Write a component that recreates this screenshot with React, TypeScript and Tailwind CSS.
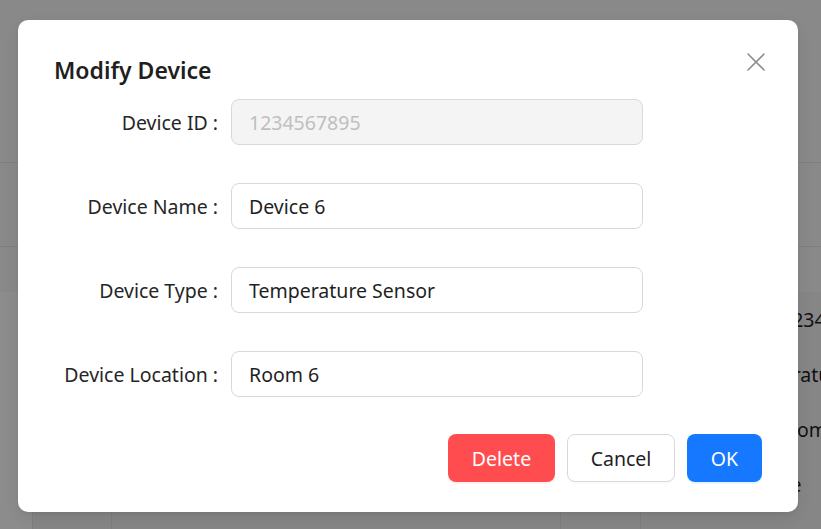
import React from 'react';

const rows = [
  { label: 'Device ID', value: '1234567895', disabled: true },
  { label: 'Device Name', value: 'Device 6' },
  { label: 'Device Type', value: 'Temperature Sensor' },
  { label: 'Device Location', value: 'Room 6' },
];

const tableRows = [
  { text: '1234567895', pad: 'pl-[140px]' },
  { text: 'Temperature Sensor', pad: 'pl-[90px]' },
  { text: 'Room 6', pad: 'pl-[132px]' },
  { text: 'Online', pad: 'pl-[100px]' },
  { text: '', pad: '' },
];

function CloseIcon() {
  return (
    <svg width="18" height="18" viewBox="0 0 18 18" fill="none">
      <path d="M1 1L17 17M17 1L1 17" stroke="#8c8c8c" strokeWidth="1.6" strokeLinecap="round" />
    </svg>
  );
}

export default function App() {
  return (
    <div className="relative h-[529px] w-[821px] overflow-hidden bg-white font-['Noto_Sans',sans-serif] text-[#1f1f1f]">
      {/* page behind the dialog */}
      <div className="h-[163px] border-b border-[#e8e8e8] bg-[#fafafa]" />
      <div className="h-[84px] border-b border-[#e8e8e8] bg-[#fafafa]" />
      <div className="h-[45px] bg-[#fafafa]" />
      <div className="ml-[32px] border-l border-[#e8e8e8] bg-[#f5f5f5]">
        {tableRows.map((r, i) => (
          <div key={i} className="flex h-[55px] items-center">
            <div className="h-full w-[79px] shrink-0 border-r border-[#e8e8e8]" />
            <div className="h-full w-[449px] shrink-0 border-r border-[#e8e8e8]" />
            <div className="h-full w-[80px] shrink-0 border-r border-[#e8e8e8]" />
            <div className={`shrink-0 whitespace-nowrap text-[19.5px] ${r.pad}`}>{r.text}</div>
          </div>
        ))}
      </div>

      {/* mask */}
      <div className="absolute inset-0 bg-black/45" />

      {/* dialog */}
      <div className="absolute left-[18px] top-[20px] h-[492px] w-[780px] rounded-[10px] bg-white px-[36px] pt-[35px] pb-[30px] shadow-[0_6px_16px_rgba(0,0,0,0.08),0_3px_6px_-4px_rgba(0,0,0,0.12)]">
        <button className="absolute right-[33px] top-[33px] flex h-[18px] w-[18px] items-center justify-center">
          <CloseIcon />
        </button>

        <h2 className="text-[23px] font-semibold leading-[30px] text-[#1f1f1f]">Modify Device</h2>

        <div className="mt-[14px]">
          {rows.map((r) => (
            <div key={r.label} className="mb-[38px] flex items-center">
              <div className="flex w-[177px] shrink-0 justify-end pt-[2px] pr-[13px] text-[19.5px] text-[#262626]">
                <span>{r.label}</span>
                <span className="ml-[5px]">:</span>
              </div>
              <div
                className={`flex h-[46px] w-[412px] items-center rounded-lg border border-[#d9d9d9] px-[17px] pt-[2px] text-[19.5px] ${
                  r.disabled ? 'bg-[#f4f4f4] text-[#bfbfbf]' : 'bg-white text-[#1f1f1f]'
                }`}
              >
                {r.value}
              </div>
            </div>
          ))}
        </div>

        <div className="-mt-[1px] flex justify-end gap-[12px]">
          <button className="h-[48px] w-[107px] rounded-lg bg-[#ff4d4f] pt-[2px] text-[19.5px] text-white shadow-[0_2px_0_rgba(255,38,5,0.06)]">
            Delete
          </button>
          <button className="h-[48px] w-[108px] rounded-lg border border-[#d9d9d9] bg-white pt-[2px] text-[19.5px] text-[#1f1f1f] shadow-[0_2px_0_rgba(0,0,0,0.02)]">
            Cancel
          </button>
          <button className="h-[48px] w-[75px] rounded-lg bg-[#1677ff] pt-[2px] text-[19.5px] text-white shadow-[0_2px_0_rgba(5,145,255,0.1)]">
            OK
          </button>
        </div>
      </div>
    </div>
  );
}
